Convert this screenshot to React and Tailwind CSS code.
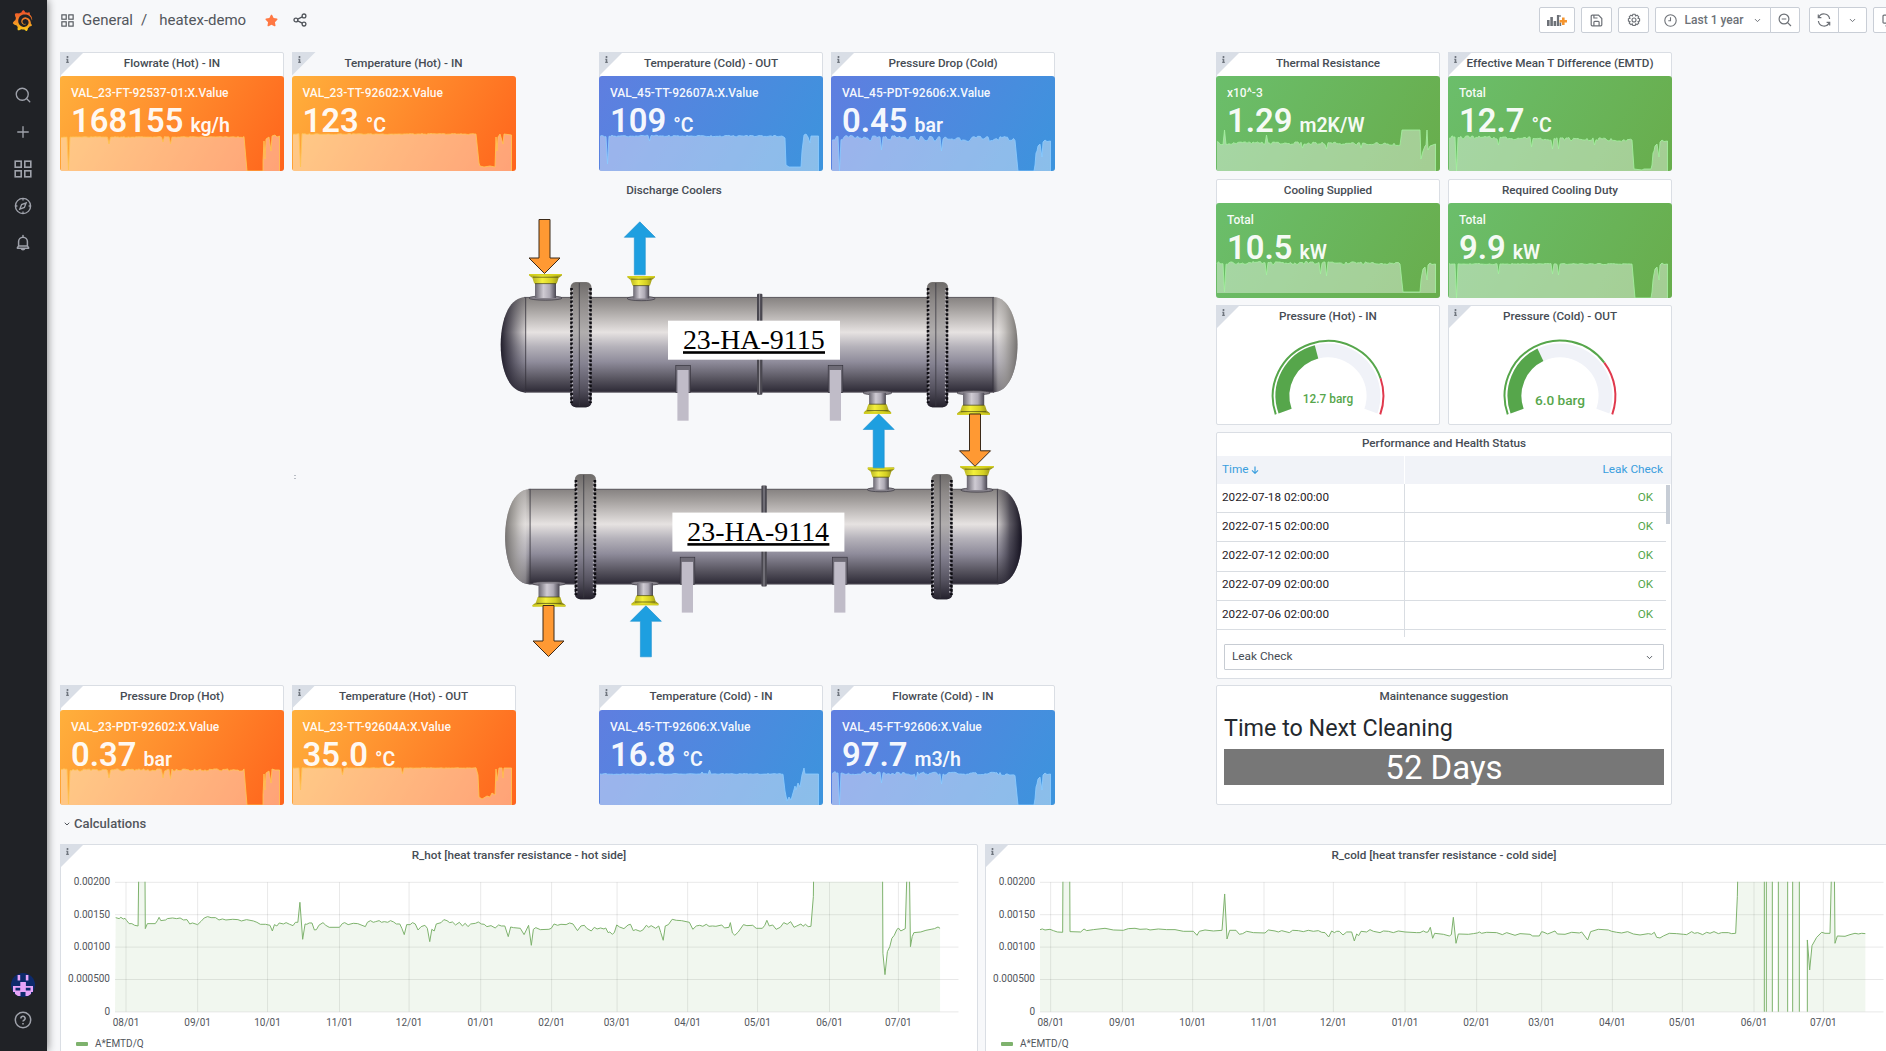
import React from "react";
import { SiGrafana } from "react-icons/si";
import { FaInfo, FaStar } from "react-icons/fa";
import { Search, Plus, ChevronDown } from "lucide-react";

const FILLS = {
  orange: "bg-[linear-gradient(120deg,#ffb03c,#ff641c)]",
  blue: "bg-[linear-gradient(120deg,#5f7ee0,#3c94dd)]",
  green: "bg-[linear-gradient(120deg,#6bbe6b,#68ad4c)]",
};
const LINES = { orange: "#ffc453", blue: "#8ccbff", green: "#a5f0a0" };

const noise = (i, seed) => {
  const v = Math.sin(i * 12.9898 + seed * 78.233) * 43758.5453;
  return (v - Math.floor(v)) * 2 - 1;
};

/* Builds the sparkline outline: [x, height above the card's bottom edge]. */
function sparkPoints({ h, n = 0.4, drift = 0, dips = [], low = [[187, 0], [203, 0]], tail, seed = 1 }) {
  const pts = [];
  for (let x = 1; x <= 185; x += 1.5) {
    const dip = dips.find((d) => Math.abs(d[0] - x) < 0.76);
    pts.push([x, dip ? dip[1] : h - (drift * x) / 185 + noise(Math.round(x / 2.2), seed) * n]);
  }
  return pts.concat(low, tail);
}

const RAMP = (h) => [[204, 6], [205, 18], [206, h - 10], [207, h - 5], [209, h - 3], [211, h - 16], [212, h - 1], [214, h + 1], [216, h - 0.5], [219.5, h]];

const SPARKS = {
  flowHot: sparkPoints({ h: 34, dips: [[8, 1], [49, 27], [103, 29], [110, 27]], tail: [[203, 10], [204, 30], [205, 12], [206, 32], [209, 34], [211, 20], [212, 35], [215, 36], [217, 34], [219.5, 35]], seed: 2 }),
  tempHotIn: sparkPoints({ h: 37, dips: [[8, 4]], low: [[187, 8], [188, 5], [192, 4], [198, 5], [203, 4]], tail: [[204, 34], [205, 20], [206, 34], [208, 37], [211, 27], [212, 37], [219.5, 36]], seed: 3 }),
  tempColdOut: sparkPoints({ h: 35, n: 0.7, dips: [[8, 7], [50, 30]], low: [[186, 33], [187, 6], [190, 4], [202, 4]], tail: [[203, 20], [205, 36], [207, 37], [209, 34], [211, 28], [212, 35], [219.5, 35]], seed: 4 }),
  dropCold: sparkPoints({ h: 33, n: 2.6, drift: 1, dips: [[8, 0], [50, 21], [110, 20], [111, 23]], tail: RAMP(30), seed: 5 }),
  resistance: sparkPoints({ h: 28, n: 1.5, drift: 1, dips: [[8, 41], [50, 36], [86, 23], [110, 22], [145, 23]], low: [[186, 41], [204, 41]], tail: [[205, 12], [207, 20], [209, 25], [210, 26], [211, 41], [212, 21], [214, 25], [219.5, 27]], seed: 6 }),
  emtd: sparkPoints({ h: 34, n: 1.6, drift: 3, dips: [[8, 0], [50, 26], [84, 24], [104, 22], [110, 22], [146, 26]], low: [[186, 2], [194, 1], [196, 2], [203, 2]], tail: RAMP(30), seed: 7 }),
  supplied: sparkPoints({ h: 35, n: 1.4, dips: [[8, 6], [50, 23], [104, 24], [110, 22]], low: [[187, 6], [203, 6]], tail: RAMP(34), seed: 8 }),
  duty: sparkPoints({ h: 34, n: 0.5, dips: [[8, 0], [50, 24], [104, 24], [110, 23]], tail: RAMP(34), seed: 9 }),
  dropHot: sparkPoints({ h: 35, n: 1.2, dips: [[8, 1], [49, 27], [103, 27], [110, 26]], tail: [[203, 10], [204, 31], [205, 15], [206, 32], [209, 34], [211, 22], [212, 36], [215, 35], [219.5, 35]], seed: 10 }),
  tempHotOut: sparkPoints({ h: 37, n: 0.2, dips: [[8, 15], [50, 30], [110, 31]], low: [[186, 30], [187, 8], [190, 6], [195, 9], [198, 8], [200, 12], [203, 10]], tail: [[204, 36], [205, 24], [207, 37], [210, 37], [211, 27], [212, 37], [219.5, 37]], seed: 11 }),
  tempColdIn: sparkPoints({ h: 31, n: 0.4, dips: [[110, 35], [103, 33]], low: [[186, 14], [188, 4], [190, 8], [192, 5], [194, 12], [196, 19], [197, 15], [199, 22], [201, 18]], tail: [[203, 30], [205, 37], [206, 31], [219.5, 31]], seed: 12 }),
  flowCold: sparkPoints({ h: 32, n: 1.6, drift: 1, dips: [[8, 0], [50, 22], [85, 25], [110, 21]], tail: RAMP(31), seed: 13 }),
};

function Spark({ name, tone }) {
  const base = name === "supplied" ? 5 : 0;
  const line = SPARKS[name].map(([x, y]) => `${x.toFixed(1)},${(44 - y).toFixed(1)}`).join(" ");
  return (
    <svg className="absolute bottom-0 left-0 h-11 w-full" viewBox="0 0 224 44" preserveAspectRatio="none">
      <polygon points={`1,${44 - base} ${line} 219.5,${44 - base}`} fill="#fff" fillOpacity="0.4" />
      <polyline points={line + ` 219.5,${44 - base}`} fill="none" stroke={LINES[tone]} strokeWidth="1" strokeOpacity="0.85" />
    </svg>
  );
}

function InfoCorner() {
  return (
    <div className="absolute -left-px -top-px h-6 w-6 bg-[#d9dee6] text-[#6f757e] [clip-path:polygon(0_0,100%_0,0_100%)]">
      <FaInfo className="ml-[5px] mt-[4px] h-[7px] w-[5px]" />
    </div>
  );
}

function Panel({ title, info, bare, className = "", children }) {
  return (
    <section className={`relative flex shrink-0 flex-col rounded-[2px] border ${bare ? "border-transparent" : "border-[#dadee4] bg-white"} ${className}`}>
      {info && <InfoCorner />}
      <h2 className="flex h-[23px] shrink-0 items-center justify-center whitespace-nowrap pb-px text-[11.7px] font-medium leading-none text-[#464c54]">{title}</h2>
      {children}
    </section>
  );
}

function Stat({ title, label, value, unit, tone, spark, info = true, bare, low }) {
  return (
    <Panel title={title} info={info} bare={bare} className={low ? "h-[120px] w-[224px]" : "h-[119px] w-[224px]"}>
      <div className={`relative -mx-px -mb-px flex grow flex-col overflow-hidden rounded-[3px] pl-[11px] text-white ${low ? "mt-px" : ""} ${FILLS[tone]}`}>
        <Spark name={spark} tone={tone} />
        <div className="relative mt-[9px] whitespace-nowrap text-[12px] font-medium leading-[16px] text-white/95">{label}</div>
        <div className="relative flex items-baseline gap-[7px] whitespace-nowrap font-semibold leading-[40px] text-white/95">
          <span className="text-[32.8px]">{value}</span>
          <span className="text-[19.5px]">{unit}</span>
        </div>
      </div>
    </Panel>
  );
}

/* ---------- gauge ---------- */
const polar = (cx, cy, r, deg) => {
  const a = (deg * Math.PI) / 180;
  return `${(cx + r * Math.sin(a)).toFixed(2)} ${(cy - r * Math.cos(a)).toFixed(2)}`;
};
const arc = (r, from, to) => `M${polar(112, 67.6, r, from)} A${r} ${r} 0 ${to - from > 180 ? 1 : 0} 1 ${polar(112, 67.6, r, to)}`;

function Gauge({ title, value, angle, limit, size, baseline }) {
  return (
    <Panel title={title} info className="h-[120px] w-[224px]">
      <svg className="-mx-px w-[224px] grow" viewBox="0 0 224 96">
        <path d={arc(46, -109.5, 109.5)} fill="none" stroke="#f0f2f8" strokeWidth="14" />
        <path d={arc(46, -109.5, angle)} fill="none" stroke="#56a64b" strokeWidth="14" />
        <path d={arc(56, -109.5, limit)} fill="none" stroke="#56a64b" strokeWidth="2" />
        <path d={arc(56, limit, 109.5)} fill="none" stroke="#e0394d" strokeWidth="2" />
        <text x="112" y={baseline} textAnchor="middle" fontSize={size} fontWeight="500" fill="#56a64b">{value}</text>
      </svg>
    </Panel>
  );
}

/* ---------- heat exchanger drawing ---------- */
function Arrow({ x, y, h, w = 31, up }) {
  const s = 5.5;
  const head = 15.5;
  const d = up
    ? `M${x} ${y} l${w / 2} ${head} h${s - w / 2} v${h - head} h${-2 * s} v${head - h} h${s - w / 2} z`
    : `M${x - s} ${y} h${2 * s} v${h - head} h${w / 2 - s} l${-w / 2} ${head} l${-w / 2} ${-head} h${w / 2 - s} z`;
  return <path d={d} fill={up ? "#1e9fe0" : "#ff9933"} stroke={up ? "#1b8fce" : "#3c2a18"} strokeWidth={up ? 0.6 : 1} />;
}

/* Nozzle whose flange face is at y; dir 1 draws the pipe downwards, -1 upwards. */
function Nozzle({ x, y, flange, pipe, len, dir }) {
  return (
    <g transform={`translate(${x} ${y}) scale(1 ${dir})`}>
      <ellipse cx="0" cy={len} rx={pipe + 6} ry="2.2" fill="#85818a" stroke="#3c3a42" strokeWidth="0.7" />
      <rect x={-pipe} y="8" width={pipe * 2} height={len - 8} fill="url(#pipe)" />
      <path d={`M${-flange} 0 H${flange} V1.6 L${pipe + 2.6} 4 L${pipe + 0.8} 9.6 H${-pipe - 0.8} L${-pipe - 2.6} 4 L${-flange} 1.6 Z`} fill="url(#brass)" />
      <path d={`M${-flange} 0.8 H${flange}`} stroke="#d6d21e" strokeWidth="1.6" />
      <path d={`M${-pipe - 2} 3.2 H${pipe + 2} M${-pipe} 9.6 H${pipe}`} stroke="#4a4714" strokeWidth="0.9" opacity="0.8" />
    </g>
  );
}

function Flange({ x, w }) {
  return (
    <g>
      <rect x={x} y="282.3" width={w} height="125" rx="5" fill="url(#flange)" />
      <path d={`M${x + 1} 288 V403 M${x + w - 1} 288 V403`} stroke="#0e0d12" strokeWidth="2.6" strokeDasharray="2.6 1.6" />
      <path d={`M${x + 2} 290 V401 M${x + w - 2.6} 290 V401`} stroke="#b9b6bd" strokeWidth="1.2" strokeDasharray="1.6 2.6" />
      <rect x={x + 3.5} y="282.3" width={w - 7} height="125" rx="2" fill="url(#flange)" />
      <path d={`M${x + w * 0.42} 283 V406`} stroke="#3a3840" strokeWidth="0.8" />
    </g>
  );
}

function Tank({ label, dy = 0, dx = 0, darkLeft }) {
  return (
    <g transform={`translate(${dx} ${dy})`}>
      <rect x="525" y="297" width="469" height="95.4" fill="url(#shell)" />
      <path d="M526 297 C509 297 500.7 320 500.7 344.6 C500.7 370 509 392.4 526 392.4 Z" fill="url(#shell)" />
      <path d="M526 297 C509 297 500.7 320 500.7 344.6 C500.7 370 509 392.4 526 392.4 Z" fill={darkLeft ? "url(#domeDarkL)" : "url(#domeLightL)"} />
      <path d="M993 297 C1009 297 1017.5 320 1017.5 344.6 C1017.5 370 1009 392.4 993 392.4 Z" fill="url(#shell)" />
      <path d="M993 297 C1009 297 1017.5 320 1017.5 344.6 C1017.5 370 1009 392.4 993 392.4 Z" fill={darkLeft ? "url(#domeLightR)" : "url(#domeDarkR)"} />
      <path d="M525.7 297 V392 M993 297 V392" stroke="#33313a" strokeWidth="0.8" />
      <path d="M524 297.4 H994 M524 392 H994" stroke="#55525a" strokeWidth="0.8" />
      <Flange x={570.5} w={21} />
      <Flange x={927} w={21} />
      <rect x="757" y="293.7" width="5.4" height="101" rx="1" fill="#4a4850" />
      <path d="M759.6 294 V394" stroke="#aaa7ae" strokeWidth="0.8" />
      {[675.8, 828.2].map((x) => (
        <g key={x}>
          <rect x={x} y="365.3" width="14.6" height="27" fill="#6e6b76" stroke="#302e38" strokeWidth="0.6" />
          <rect x={x + 1.6} y="370" width="11.2" height="50.7" fill="#c0bcc8" />
        </g>
      ))}
      <rect x="668" y="320.7" width="172" height="39" fill="#fff" />
      <text x="753.8" y="348.9" textAnchor="middle" fontSize="28.2" textLength="141.8" lengthAdjust="spacingAndGlyphs" fill="#000" className="font-['Liberation_Serif',serif]">{label}</text>
      <rect x="683" y="351.2" width="142" height="2.6" fill="#000" />
    </g>
  );
}

function Exchanger() {
  return (
    <svg className="h-[478px] w-[764px]" viewBox="291 199 764 478">
      <defs>
        <linearGradient id="shell" x1="0" y1="0" x2="0" y2="1">
          <stop offset="0" stopColor="#858180" />
          <stop offset="0.12" stopColor="#a39f9d" />
          <stop offset="0.37" stopColor="#e6e2e1" />
          <stop offset="0.52" stopColor="#b5b2ba" />
          <stop offset="0.68" stopColor="#8f8c9b" />
          <stop offset="0.86" stopColor="#57545f" />
          <stop offset="1" stopColor="#2c2935" />
        </linearGradient>
        <linearGradient id="flange" x1="0" y1="0" x2="0" y2="1">
          <stop offset="0" stopColor="#6f6c6a" />
          <stop offset="0.15" stopColor="#8d8988" />
          <stop offset="0.4" stopColor="#b1aeae" />
          <stop offset="0.65" stopColor="#858291" />
          <stop offset="0.85" stopColor="#55525f" />
          <stop offset="1" stopColor="#24212c" />
        </linearGradient>
        <linearGradient id="pipe" x1="0" y1="0" x2="1" y2="0">
          <stop offset="0" stopColor="#6a6771" />
          <stop offset="0.4" stopColor="#cfcbd3" />
          <stop offset="0.7" stopColor="#aeaab5" />
          <stop offset="1" stopColor="#4a4752" />
        </linearGradient>
        <linearGradient id="brass" x1="0" y1="0" x2="1" y2="0">
          <stop offset="0" stopColor="#a5a11b" />
          <stop offset="0.4" stopColor="#f4f03c" />
          <stop offset="0.7" stopColor="#d4cf22" />
          <stop offset="1" stopColor="#85811a" />
        </linearGradient>
        <linearGradient id="domeDarkL" x1="0" y1="0" x2="1" y2="0">
          <stop offset="0" stopColor="#1a1724" stopOpacity="0.95" />
          <stop offset="0.4" stopColor="#2a2735" stopOpacity="0.65" />
          <stop offset="1" stopColor="#4a4753" stopOpacity="0.1" />
        </linearGradient>
        <linearGradient id="domeDarkR" x1="1" y1="0" x2="0" y2="0">
          <stop offset="0" stopColor="#0f0c1a" stopOpacity="0.97" />
          <stop offset="0.5" stopColor="#252230" stopOpacity="0.7" />
          <stop offset="1" stopColor="#4a4753" stopOpacity="0.15" />
        </linearGradient>
        <linearGradient id="domeLightL" x1="0" y1="0" x2="1" y2="0">
          <stop offset="0" stopColor="#6d6a67" stopOpacity="0.9" />
          <stop offset="0.4" stopColor="#a3a09c" stopOpacity="0.75" />
          <stop offset="0.8" stopColor="#dddad8" stopOpacity="0.45" />
          <stop offset="1" stopColor="#b0adab" stopOpacity="0.1" />
        </linearGradient>
        <linearGradient id="domeLightR" x1="1" y1="0" x2="0" y2="0">
          <stop offset="0" stopColor="#6d6a67" stopOpacity="0.9" />
          <stop offset="0.4" stopColor="#a3a09c" stopOpacity="0.75" />
          <stop offset="0.8" stopColor="#dddad8" stopOpacity="0.45" />
          <stop offset="1" stopColor="#b0adab" stopOpacity="0.1" />
        </linearGradient>
      </defs>
      <path d="M294 475.5 h2 M294 478.5 h2" stroke="#b8bdc4" strokeWidth="1.2" />
      <Tank label="23-HA-9115" darkLeft />
      <Tank label="23-HA-9114" dx={4.4} dy={191.9} />
      <Nozzle x={545.5} y={274} flange={16.3} pipe={10.5} len={24} dir={1} />
      <Nozzle x={641.2} y={276} flange={13.6} pipe={8} len={22.5} dir={1} />
      <Nozzle x={877.5} y={413.8} flange={13.6} pipe={8.4} len={21} dir={-1} />
      <Nozzle x={973.6} y={414.8} flange={16.4} pipe={10.6} len={22} dir={-1} />
      <Nozzle x={881} y={467.6} flange={13.2} pipe={7.8} len={22} dir={1} />
      <Nozzle x={977} y={466} flange={16.6} pipe={10.2} len={24} dir={1} />
      <Nozzle x={549} y={606.6} flange={16.4} pipe={10.5} len={23} dir={-1} />
      <Nozzle x={645} y={605.2} flange={13.4} pipe={8} len={22} dir={-1} />
      <Arrow x={544.5} y={219.5} h={54} />
      <Arrow x={639.8} y={221.8} h={53} up />
      <Arrow x={878.7} y={414} h={53.8} up />
      <Arrow x={975} y={414} h={52.3} />
      <Arrow x={548.5} y={605.5} h={51} />
      <Arrow x={645.9} y={605.8} h={51} up />
    </svg>
  );
}

/* ---------- time series ---------- */
const HOT = "335,743 345,746 350,742 357,747 362,745 367,752 374,761 382,761 390,766 400,768 402,600 420,600 421,776 427,761 450,761 456,752 461,742 466,752 480,750 485,746 500,744 512,746 522,744 532,750 542,749 550,762 558,759 573,764 583,754 592,744 602,740 612,743 625,743 635,750 645,747 655,750 675,748 690,749 700,753 715,749 735,753 745,757 755,763 770,763 783,766 790,783 796,764 803,768 810,759 822,762 830,758 840,763 850,767 857,757 864,757 870,697 878,808 885,762 890,763 897,759 905,759 912,780 918,779 925,766 937,758 945,766 955,772 985,772 993,761 1000,758 1010,764 1025,760 1038,761 1060,770 1066,757 1075,752 1083,757 1090,755 1100,752 1107,757 1115,755 1125,757 1133,752 1142,756 1150,762 1160,762 1166,775 1173,794 1180,764 1190,764 1197,758 1205,762 1213,780 1222,770 1233,766 1240,775 1247,815 1253,778 1260,783 1266,762 1280,758 1288,749 1297,752 1305,758 1313,756 1322,765 1333,757 1342,768 1350,760 1358,770 1366,762 1380,760 1388,756 1397,762 1405,763 1413,770 1425,767 1437,774 1447,765 1455,768 1465,768 1475,800 1482,771 1490,773 1510,775 1521,794 1534,766 1542,826 1548,778 1555,773 1568,779 1593,778 1600,775 1608,762 1618,766 1628,763 1643,764 1653,759 1663,762 1676,782 1686,768 1696,766 1703,775 1716,783 1725,772 1733,777 1743,774 1753,777 1758,774 1765,788 1770,786 1777,793 1783,788 1790,765 1798,771 1811,776 1823,765 1830,763 1838,782 1845,779 1858,784 1866,780 1876,766 1883,772 1890,767 1903,775 1912,768 1918,788 1925,811 1931,768 1940,764 1951,748 1963,751 1978,752 2001,757 2011,778 2021,768 2031,766 2040,769 2050,763 2058,769 2068,768 2078,769 2095,765 2103,774 2116,772 2120,758 2126,789 2133,796 2143,786 2158,764 2168,767 2185,766 2195,775 2213,775 2220,766 2226,751 2233,768 2243,765 2253,778 2265,772 2275,758 2285,763 2295,755 2305,772 2313,768 2325,762 2331,769 2338,763 2346,770 2354,769 2361,680 2362,600 2562,600 2563,850 2569,914 2576,845 2583,830 2589,805 2596,796 2603,780 2608,774 2615,783 2628,776 2633,600 2640,600 2643,830 2648,800 2653,788 2673,786 2688,781 2703,778 2713,776 2723,771 2729,775";

const COLD = "180,299 187,297 195,300 210,298 220,302 232,306 248,307 249,100 269,100 270,305 302,306 312,297 320,302 340,299 375,295 400,300 430,301 445,296 465,295 480,298 500,297 510,300 535,297 560,299 585,299 600,302 610,304 640,304 651,316 658,304 675,300 700,303 726,301 734,192 741,327 749,301 768,301 778,313 788,311 800,304 820,308 855,309 865,300 885,303 895,306 905,302 928,308 938,301 955,302 970,305 985,301 1000,304 1015,302 1025,307 1035,308 1046,321 1055,303 1063,308 1070,304 1078,304 1089,315 1100,306 1115,306 1123,333 1130,312 1136,317 1143,304 1160,306 1170,299 1180,304 1200,308 1210,303 1225,304 1240,308 1255,303 1275,306 1310,308 1320,308 1330,303 1338,307 1344,306 1351,292 1358,325 1364,310 1390,313 1408,318 1414,314 1420,262 1428,340 1435,312 1465,313 1480,311 1492,309 1498,306 1505,310 1520,307 1550,308 1567,314 1580,308 1605,316 1620,311 1650,313 1658,318 1678,318 1685,305 1692,307 1703,312 1725,303 1732,312 1755,313 1775,307 1798,309 1805,306 1823,330 1832,305 1855,298 1885,300 1895,304 1910,307 1925,309 1943,305 1960,312 1980,315 2005,311 2015,313 2023,307 2030,322 2040,324 2050,318 2068,310 2090,311 2110,313 2120,314 2135,305 2143,310 2153,308 2168,314 2180,307 2190,310 2202,305 2215,311 2225,308 2245,308 2255,311 2267,310 2272,200 2274,100 2353,100 2353,600 2359,600 2359,100 2377,100 2377,600 2395,600 2395,100 2423,100 2423,600 2438,600 2438,100 2458,100 2458,600 2482,600 2482,330 2489,420 2496,347 2510,322 2525,307 2535,310 2550,310 2555,100 2563,100 2565,340 2572,318 2595,319 2610,314 2625,310 2635,312 2645,310 2656,311";

/* Maps raw samples to plot pixels; y runs 0 (0.002) to 129.5 (0). */
const scale = (raw, x0, kx, y0, ky) =>
  raw.split(" ").map((p) => {
    const [x, y] = p.split(",").map(Number);
    return [(x - x0) / kx, (y - y0) / ky];
  });

const MONTHS = ["08/01", "09/01", "10/01", "11/01", "12/01", "01/01", "02/01", "03/01", "04/01", "05/01", "06/01", "07/01"];
const TICKS = ["0.00200", "0.00150", "0.00100", "0.000500", "0"];

function TimeSeries({ title, points, ticks, id }) {
  const line = points.map(([x, y]) => `${x.toFixed(2)},${y.toFixed(2)}`).join(" ");
  const end = points[points.length - 1][0];
  return (
    <Panel title={title} info className="h-[240px] w-[918px]">
      <svg className="mt-[3px] h-[172px] w-full shrink-0" viewBox="-54 -11.3 916 172">
        <clipPath id={id}><rect x="0" y="-0.5" width="844" height="130" /></clipPath>
        <g stroke="#000" strokeOpacity="0.09" strokeWidth="1">
          {TICKS.map((t, i) => <path key={t} d={`M0 ${i * 32.4} H843.5`} />)}
          {ticks.map((x, i) => <path key={i} d={`M${x} 0 V129.5`} />)}
        </g>
        <g clipPath={`url(#${id})`}>
          <polygon points={`0,129.5 ${line} ${end},129.5`} fill="#7eb26d" fillOpacity="0.11" />
          <polyline points={line} fill="none" stroke="#7eb26d" strokeWidth="1" strokeLinejoin="round" />
        </g>
        <g fontSize="10" fill="#52565c">
          {TICKS.map((t, i) => <text key={t} x="-5" y={i * 32.4 + 3} textAnchor="end">{t}</text>)}
          {MONTHS.map((m, i) => <text key={m} x={ticks[i]} y="144" textAnchor="middle">{m}</text>)}
        </g>
      </svg>
      <div className="-mt-[5px] flex items-center gap-[7px] pl-[15px] text-[10px] leading-[12px] text-[#52565c]">
        <span className="h-1 w-3 rounded-[1px] bg-[#7eb26d]" />
        A*EMTD/Q
      </div>
    </Panel>
  );
}

const hotTicks = [365, 573, 776, 985, 1187, 1395, 1601, 1791, 1996, 2199, 2408, 2608].map((x) => (x - 333) / 2.904);
const coldTicks = [212, 427, 638, 852, 1060, 1275, 1490, 1685, 1897, 2107, 2322, 2530].map((x) => (x - 180) / 3);

/* ---------- chrome ---------- */
function Apps({ className }) {
  return (
    <svg className={className} viewBox="0 0 18 18" fill="none" stroke="currentColor" strokeWidth="1.6">
      <rect x="1.2" y="1.2" width="6" height="6" /><rect x="10.8" y="1.2" width="6" height="6" />
      <rect x="1.2" y="10.8" width="6" height="6" /><rect x="10.8" y="10.8" width="6" height="6" />
    </svg>
  );
}

function Sidebar() {
  return (
    <nav className="z-10 flex w-[47px] shrink-0 flex-col items-center bg-[#202226] pb-[22px] pr-[2px] pt-[9px] text-[#9fa2ab] shadow-[0_0_9px_rgba(0,0,0,0.55)]">
      <svg className="h-0 w-0">
        <linearGradient id="sun" x1="0" y1="0" x2="0" y2="1">
          <stop offset="0" stopColor="#ee4b2b" /><stop offset="0.55" stopColor="#f58a26" /><stop offset="1" stopColor="#fcd016" />
        </linearGradient>
      </svg>
      <SiGrafana className="h-[23px] w-[21px] [&>path]:fill-[url(#sun)]" />
      <div className="mt-[54px] flex flex-col items-center gap-[19px]">
        <Search className="h-[18px] w-[18px]" strokeWidth={1.8} />
        <Plus className="h-[18px] w-[18px]" strokeWidth={1.8} />
        <Apps className="h-[18px] w-[18px]" />
        <svg className="h-[18px] w-[18px]" viewBox="0 0 18 18" fill="none" stroke="currentColor" strokeWidth="1.4">
          <circle cx="9" cy="9" r="7.6" />
          <path d="M9 1.4v2 M9 14.6v2 M1.4 9h2 M14.6 9h2 M12.2 5.8 L10.4 10.4 L5.8 12.2 L7.6 7.6 Z" strokeWidth="1.3" />
        </svg>
        <svg className="h-[18px] w-[18px]" viewBox="0 0 18 18" fill="none" stroke="currentColor" strokeWidth="1.5" strokeLinejoin="round" strokeLinecap="round">
          <path d="M9 1.4v1.8 M4.6 12V7.6a4.4 4.4 0 0 1 8.8 0V12 M3.4 14.2V13.6L4.6 12h8.8l1.2 1.6v.6z M7.2 14.4a1.9 1.9 0 0 0 3.6 0" />
        </svg>
      </div>
      <div className="mt-auto flex flex-col items-center gap-[14px]">
        <svg className="h-6 w-6 rounded-full" viewBox="0 0 24 24">
          <rect width="24" height="24" fill="#0d2a6b" />
          <g fill="#e7a4f8">
            <path d="M6.6 2h2.6v5.6H6.6z M14.8 2h2.6v5.6h-2.6z M9.3 9h5.6v4H9.3z" />
            <path d="M2 13h20v6h-2v4h-5.5v-4H9.5v4H4v-4H2z" />
          </g>
          <path d="M4.5 14.8h4.7v2.6H4.5z M14.8 14.8h4.7v2.6h-4.7z" fill="#0d2a6b" />
        </svg>
        <svg className="h-[18px] w-[18px]" viewBox="0 0 18 18" fill="none" stroke="currentColor" strokeWidth="1.5">
          <circle cx="9" cy="9" r="7.7" />
          <path d="M6.9 7.4a2.1 2.1 0 1 1 3.1 1.8c-.7.4-1 .7-1 1.3 M9 12v1.4" strokeWidth="1.6" />
        </svg>
      </div>
    </nav>
  );
}

const BTN = "flex h-[26px] shrink-0 items-center justify-center whitespace-nowrap border border-[#c9ced6] bg-white text-[#6d7177]";

function Topbar() {
  return (
    <header className="flex h-[52px] shrink-0 items-start overflow-hidden pl-[14px] pt-[7px] text-[#52565c]">
      <div className="flex h-[26px] w-[1478px] shrink-0 items-center whitespace-nowrap">
        <Apps className="h-[13px] w-[13px] shrink-0" />
        <span className="ml-[8px] text-[15px] leading-none">General</span>
        <span className="ml-[8px] text-[15px] leading-none">/</span>
        <span className="ml-[12px] text-[15px] leading-none">heatex-demo</span>
        <FaStar className="ml-[19px] h-[13px] w-[13px] text-[#ff7843]" />
        <svg className="ml-[15px] h-[14px] w-[14px]" viewBox="0 0 14 14" fill="none" stroke="currentColor" strokeWidth="1.3">
          <circle cx="2.9" cy="7" r="1.9" /><circle cx="11" cy="2.9" r="1.9" /><circle cx="11" cy="11.1" r="1.9" />
          <path d="M4.7 6.1 9.2 3.8 M4.7 7.9 9.2 10.2" />
        </svg>
      </div>
      <div className="flex shrink-0">
        <button className={`${BTN} w-[36px] rounded-[2px]`}>
          <svg className="h-[14px] w-[22px]" viewBox="0 0 22 14">
            <path d="M1 7h2.6v6H1z M4.3 4h2.6v9H4.3z M7.6 8h2.6v5H7.6z M10.9 2h2.2v11h-2.2z M13.6 9.5h1.6V13h-1.6z M13.4 2h1.2v2h-1.2z" fill="#6d7177" />
            <path d="M16 4.5h2.6v2.4H21v2.6h-2.4V12H16V9.5h-2.4V6.9H16z" fill="#f5952e" />
          </svg>
        </button>
        <button className={`${BTN} ml-[6px] w-[31px] rounded-[2px]`}>
          <svg className="h-[13px] w-[13px]" viewBox="0 0 13 13" fill="none" stroke="currentColor" strokeWidth="1.2">
            <path d="M1.2 2.2a1 1 0 0 1 1-1H8.5L11.8 4.5v6.3a1 1 0 0 1-1 1H2.2a1 1 0 0 1-1-1z M3.9 1.4V4h3.6 M3.9 11.6V8.2a.9.9 0 0 1 .9-.9h3.4a.9.9 0 0 1 .9.9v3.4" />
          </svg>
        </button>
        <button className={`${BTN} ml-[6px] w-[31px] rounded-[2px]`}>
          <svg className="h-[14px] w-[14px]" viewBox="0 0 14 14" fill="none" stroke="currentColor" strokeWidth="1.1" strokeLinejoin="round">
            <path d="M5.8 1h2.4l.4 1.7 1.5-.9 1.7 1.7-.9 1.5 1.7.4v2.4l-1.7.4.9 1.5-1.7 1.7-1.5-.9-.4 1.7H5.8l-.4-1.7-1.5.9-1.7-1.7.9-1.5L1.4 7.8V5.4l1.7-.4-.9-1.5 1.7-1.7 1.5.9z" transform="translate(0 .3)" />
            <circle cx="7" cy="7" r="2" />
          </svg>
        </button>
        <button className={`${BTN} ml-[6px] w-[116px] rounded-l-[2px] text-[12px] font-medium`}>
          <svg className="h-[13px] w-[13px]" viewBox="0 0 13 13" fill="none" stroke="currentColor" strokeWidth="1.1">
            <circle cx="6.5" cy="6.5" r="5.7" /><path d="M6.5 3.2V6.8H4.3" />
          </svg>
          <span className="ml-[8px] pb-px leading-none">Last 1 year</span>
          <ChevronDown className="ml-[10px] h-[9px] w-[9px]" strokeWidth={2.6} />
        </button>
        <button className={`${BTN} -ml-px w-[30px] rounded-r-[2px]`}>
          <svg className="h-[14px] w-[14px]" viewBox="0 0 14 14" fill="none" stroke="currentColor" strokeWidth="1.2">
            <circle cx="6" cy="6" r="4.9" /><path d="M9.6 9.6 13 13 M3.7 6h4.6" />
          </svg>
        </button>
        <button className={`${BTN} ml-[9px] w-[30px] rounded-l-[2px]`}>
          <svg className="h-[14px] w-[14px]" viewBox="0 0 14 14" fill="none" stroke="currentColor" strokeWidth="1.2">
            <path d="M1.3 1.5V4.6H4.4 M1.7 4.4A5.7 5.7 0 0 1 12.6 6 M12.7 12.5V9.4H9.6 M12.3 9.6A5.7 5.7 0 0 1 1.4 8" />
          </svg>
        </button>
        <button className={`${BTN} -ml-px w-[29px] rounded-r-[2px]`}>
          <ChevronDown className="h-[9px] w-[9px]" strokeWidth={2.6} />
        </button>
        <button className={`${BTN} ml-[6px] w-[31px] rounded-[2px]`}>
          <svg className="h-[13px] w-[13px]" viewBox="0 0 13 13" fill="none" stroke="currentColor" strokeWidth="1.2">
            <rect x="1" y="1.2" width="11" height="8" rx="1" /><path d="M6.5 9.2v2.6 M3.5 11.8h6" />
          </svg>
        </button>
      </div>
    </header>
  );
}

const ROWS = ["2022-07-18", "2022-07-15", "2022-07-12", "2022-07-09", "2022-07-06"];

function StatusTable() {
  return (
    <Panel title="Performance and Health Status" className="mt-[7px] h-[247px] w-[456px]">
      <div className="flex h-[28px] shrink-0 items-center bg-[#f1f3f8] text-[11.8px] text-[#3a9ede]">
        <div className="flex h-full w-[188px] items-center gap-[2px] border-r border-white pb-px pl-[5px]">
          Time
          <svg className="h-[8px] w-[8px]" viewBox="0 0 8 8" fill="none" stroke="currentColor" strokeWidth="1.2"><path d="M4 .5v6.7 M1 4.3 4 7.3 7 4.3" /></svg>
        </div>
        <div className="grow pb-px pr-[8px] text-right">Leak Check</div>
      </div>
      <div className="flex h-[154px] shrink-0 overflow-hidden text-[11.7px]">
        <div className="w-[449px]">
          {ROWS.map((d) => (
            <div key={d} className="flex h-[29.2px] border-b border-[#d9dde2]">
              <div className="flex w-[188px] items-center border-r border-[#d9dde2] pb-px pl-[5px] text-[#1f2227]">{d} 02:00:00</div>
              <div className="flex grow items-center justify-end pb-px pr-[13px] text-[#56a64b]">OK</div>
            </div>
          ))}
          <div className="h-[7px] w-[188px] border-r border-[#d9dde2]" />
        </div>
        <div className="mt-px h-[39px] w-1 bg-[#c7cdd6]" />
      </div>
      <div className="mx-[7px] mt-[6px] flex h-[26px] items-center justify-between rounded-[1px] border border-[#c7ccd3] pl-[7px] pr-[9px] text-[11.8px] text-[#464c54]">
        Leak Check
        <ChevronDown className="h-[9px] w-[9px]" strokeWidth={2.4} />
      </div>
    </Panel>
  );
}

export default function App() {
  return (
    <div className="flex h-[1051px] w-[1886px] overflow-hidden bg-[#f7f8fa] font-[Roboto,sans-serif]">
      <Sidebar />
      <div className="flex min-w-0 grow flex-col">
        <Topbar />
        <main className="flex flex-col pl-[13px]">
          <div className="flex">
            <div className="flex w-[995px] flex-col">
              <div className="flex">
                <Stat title="Flowrate (Hot) - IN" label="VAL_23-FT-92537-01:X.Value" value="168155" unit="kg/h" tone="orange" spark="flowHot" />
                <div className="ml-[7.5px] flex"><Stat bare title="Temperature (Hot) - IN" label="VAL_23-TT-92602:X.Value" value="123" unit="°C" tone="orange" spark="tempHotIn" /></div>
                <div className="ml-[83.5px] flex gap-[8px]">
                  <Stat title="Temperature (Cold) - OUT" label="VAL_45-TT-92607A:X.Value" value="109" unit="°C" tone="blue" spark="tempColdOut" />
                  <Stat title="Pressure Drop (Cold)" label="VAL_45-PDT-92606:X.Value" value="0.45" unit="bar" tone="blue" spark="dropCold" />
                </div>
              </div>
              <div className="ml-[231px] mt-[8px] flex h-[498px] w-[764px] flex-col">
                <h2 className="flex h-[20px] items-end justify-center pb-[2px] pl-[2px] text-[11.7px] font-medium leading-none text-[#464c54]">Discharge Coolers</h2>
                <Exchanger />
              </div>
              <div className="mt-[8px] flex">
                <Stat low title="Pressure Drop (Hot)" label="VAL_23-PDT-92602:X.Value" value="0.37" unit="bar" tone="orange" spark="dropHot" />
                <div className="ml-[7.5px] flex"><Stat low title="Temperature (Hot) - OUT" label="VAL_23-TT-92604A:X.Value" value="35.0" unit="°C" tone="orange" spark="tempHotOut" /></div>
                <div className="ml-[83.5px] flex gap-[8px]">
                  <Stat low title="Temperature (Cold) - IN" label="VAL_45-TT-92606:X.Value" value="16.8" unit="°C" tone="blue" spark="tempColdIn" />
                  <Stat low title="Flowrate (Cold) - IN" label="VAL_45-FT-92606:X.Value" value="97.7" unit="m3/h" tone="blue" spark="flowCold" />
                </div>
              </div>
            </div>
            <div className="ml-[161px] flex w-[456px] flex-col">
              <div className="grid grid-cols-2 gap-x-[8px] gap-y-[8px]">
                <Stat title="Thermal Resistance" label="x10^-3" value="1.29" unit="m2K/W" tone="green" spark="resistance" />
                <Stat title="Effective Mean T Difference (EMTD)" label="Total" value="12.7" unit="°C" tone="green" spark="emtd" />
                <Stat info={false} title="Cooling Supplied" label="Total" value="10.5" unit="kW" tone="green" spark="supplied" />
                <Stat info={false} title="Required Cooling Duty" label="Total" value="9.9" unit="kW" tone="green" spark="duty" />
              </div>
              <div className="mt-[7px] flex gap-[8px]">
                <Gauge title="Pressure (Hot) - IN" value="12.7 barg" angle={-14.6} limit={71.5} size={12} baseline={74.5} />
                <Gauge title="Pressure (Cold) - OUT" value="6.0 barg" angle={-25.5} limit={53} size={13.8} baseline={76.3} />
              </div>
              <StatusTable />
              <Panel title="Maintenance suggestion" className="mt-[6px] h-[120px] w-[456px]">
                <div className="px-[7px]">
                  <div className="pt-[5px] text-[23.3px] leading-[29px] text-[#24292e]">Time to Next Cleaning</div>
                  <div className="mt-[6px] flex h-[36px] items-center justify-center bg-[#777777] text-[33px] leading-none text-white">52 Days</div>
                </div>
              </Panel>
            </div>
          </div>
          <div className="flex h-[39px] items-center gap-[3px] pb-[2px] pl-[3px] text-[13px] font-medium text-[#52565c]">
            <ChevronDown className="h-[8px] w-[8px]" strokeWidth={3} />
            Calculations
          </div>
          <div className="flex gap-[7px]">
            <TimeSeries id="clip-hot" title="R_hot [heat transfer resistance - hot side]" points={scale(HOT, 333, 2.904, 637, 3)} ticks={hotTicks} />
            <TimeSeries id="clip-cold" title="R_cold [heat transfer resistance - cold side]" points={scale(COLD, 180, 3, 157, 3)} ticks={coldTicks} />
          </div>
        </main>
      </div>
    </div>
  );
}
